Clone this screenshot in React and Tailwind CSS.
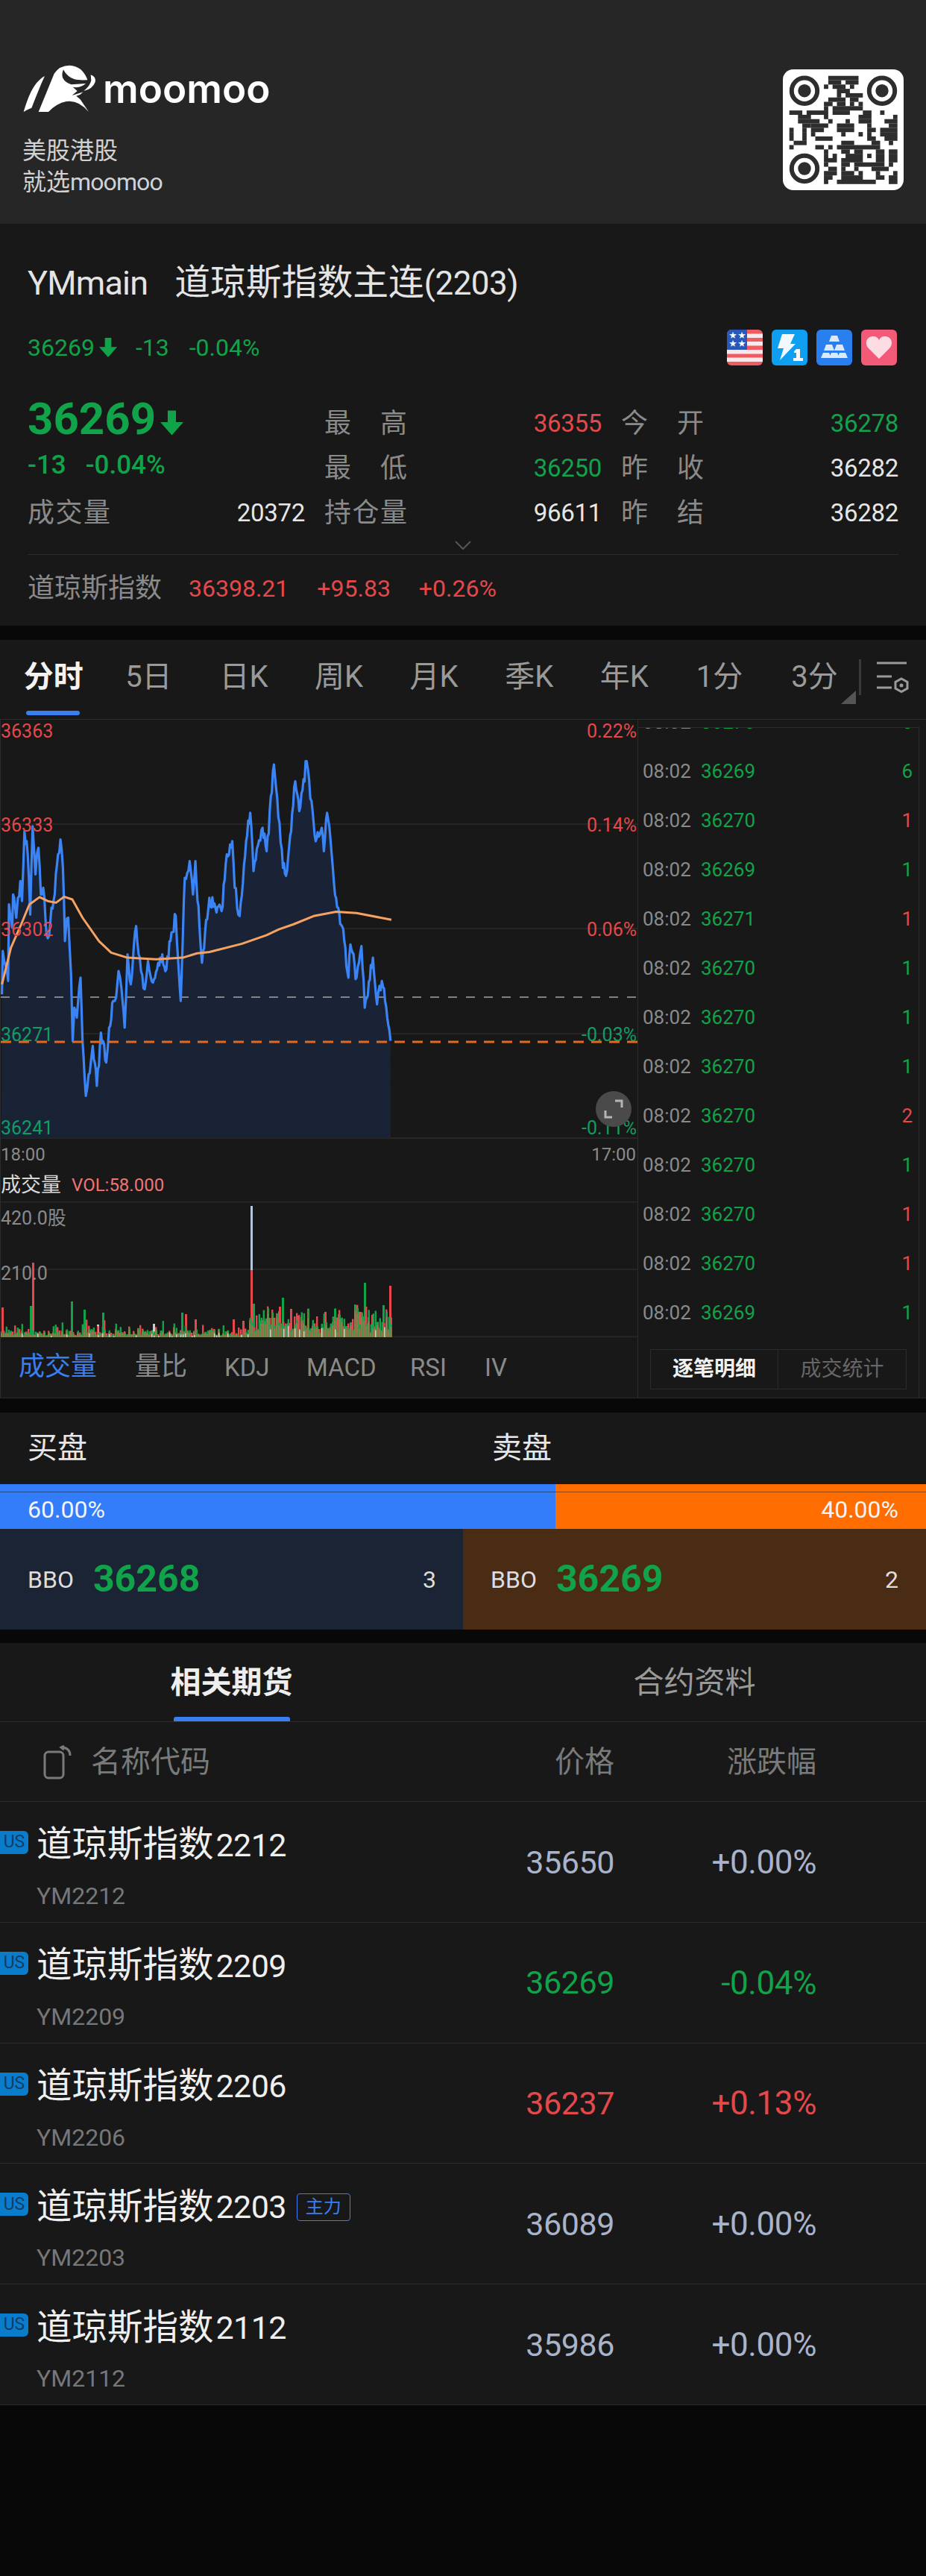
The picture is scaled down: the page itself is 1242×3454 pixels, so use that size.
import React from "react";

const GREEN = "#10a34a";
const rnd = (i) => {
  const x = Math.sin(i * 12.9898 + 4.1) * 43758.5453;
  return x - Math.floor(x);
};

const QR_ROWS = [
  [[9, 15]],
  [[9, 11], [13, 15]],
  [[8, 8], [10, 12], [14, 14]],
  [[11, 13]],
  [[11, 11], [13, 16]],
  [[9, 12], [14, 15]],
  [[8, 9], [11, 12], [14, 14], [16, 16]],
  [[8, 8], [10, 16]],
  [[0, 2], [4, 8], [10, 13], [17, 18], [21, 21]],
  [[2, 4], [8, 8], [16, 18], [24, 24]],
  [[2, 6], [9, 9], [13, 13], [16, 18], [22, 24]],
  [[3, 4], [5, 8], [11, 14], [18, 18], [23, 24]],
  [[0, 0], [3, 3], [5, 7], [11, 14], [18, 19], [21, 24]],
  [[0, 0], [3, 3], [5, 5], [12, 12], [16, 16], [18, 18], [21, 24]],
  [[0, 0], [3, 3], [6, 9], [18, 19], [22, 24]],
  [[1, 3], [12, 14], [19, 20], [23, 23]],
  [[0, 0], [6, 7], [9, 9], [11, 20]],
  [[8, 8], [12, 13], [15, 16], [20, 21], [23, 24]],
  [[8, 8], [10, 10], [13, 16], [18, 18], [20, 21], [23, 24]],
  [[8, 10], [12, 16], [20, 21], [23, 24]],
  [[8, 8], [12, 13], [15, 21], [23, 23]],
  [[9, 10], [12, 12], [15, 15], [19, 22]],
  [[8, 10], [12, 14], [16, 16], [20, 20], [24, 24]],
  [[8, 9], [12, 16], [20, 21], [23, 24]],
  [[8, 8], [11, 19], [23, 24]],
];

function QR() {
  const c = "#2e2e2e";
  const finder = (cx, cy) => (
    <g key={cx + "-" + cy}>
      <circle cx={cx} cy={cy} r="17.2" fill="none" stroke={c} strokeWidth="6" />
      <circle cx={cx} cy={cy} r="8.7" fill={c} />
    </g>
  );
  return (
    <div className="mt-[93px] mr-[30px] h-[162px] w-[162px] rounded-[14px] bg-white">
      <svg width="162" height="162" viewBox="0 0 162 162">
        {QR_ROWS.flatMap((row, r) =>
          row.map(([a, b], i) => (
            <rect key={r + "-" + i} x={8.7 + a * 5.8} y={8.7 + r * 5.8} width={(b - a + 1) * 5.8} height="5.9" fill={c} />
          ))
        )}
        {finder(29, 28.7)}
        {finder(133, 28.7)}
        {finder(29, 133)}
      </svg>
    </div>
  );
}

function Bull() {
  return (
    <svg width="100" height="66" viewBox="85 140 300 198" className="block">
      <path d="M90 332 C105 285 125 215 175 188 C155 230 135 285 122 316 Q105 322 90 332Z" fill="#fff" />
      <path d="M150 332 L213 178 Q235 145 275 145 Q325 147 346 200 L350 232 L318 262 L302 268 L318 282 L352 332 Q310 282 262 290 Q222 298 190 332Z" fill="#fff" />
      <path d="M250 162 Q232 205 282 222 L340 218 Q318 238 288 232 L306 248 L285 266 L330 252 Q362 240 370 208 L378 190 Q362 206 320 204 Q272 204 250 162Z" fill="#262626" />
      <path d="M360 183 Q382 190 378 212 Q368 240 332 248 Q358 226 362 205Z" fill="#fff" />
    </svg>
  );
}

function ArrowDown({ w = 28, h = 30, color = GREEN }) {
  return (
    <svg width={w} height={h} viewBox="0 0 28 30">
      <path d="M9 0 H19 V14 H28 L14 30 L0 14 H9Z" fill={color} />
    </svg>
  );
}

function Badges() {
  return (
    <div className="mr-[2px] flex gap-[12px]">
      <svg width="48" height="48" viewBox="0 0 48 48" className="rounded-[6px]">
        <rect width="48" height="48" fill="#ef5b62" />
        <rect y="5.5" width="48" height="5.5" fill="#f8e8ea" />
        <rect y="16" width="48" height="5.5" fill="#f8e8ea" />
        <rect y="27" width="48" height="5.5" fill="#f8e8ea" />
        <rect y="37.5" width="48" height="5.5" fill="#f8e8ea" />
        <rect width="27" height="27" fill="#2a58b8" />
        <text x="3" y="11" fontSize="10" fill="#fff">★</text>
        <text x="15" y="11" fontSize="10" fill="#fff">★</text>
        <text x="3" y="22" fontSize="10" fill="#fff">★</text>
        <text x="15" y="22" fontSize="10" fill="#fff">★</text>
      </svg>
      <svg width="48" height="48" viewBox="0 0 48 48" className="rounded-[6px]">
        <rect width="48" height="48" fill="#0f9ff0" />
        <path d="M14 6 H31 L25 19 H32 L11 41 L16 25 H8Z" fill="#f2f8fd" />
        <path d="M33 26 H38 V38 H42 V42 H29 V38 H33 V31 H30 V29Z" fill="#f2f8fd" />
      </svg>
      <svg width="48" height="48" viewBox="0 0 48 48" className="rounded-[6px]">
        <rect width="48" height="48" fill="#2a7fee" />
        <g fill="#dbe9fb">
          <path d="M20 8 H28 L31 16 H17Z" />
          <path d="M13 20 H21 L24 28 H10Z" />
          <path d="M27 20 H35 L38 28 H24Z" />
          <path d="M9 31 H17 L20 38 H6Z" />
          <path d="M20 31 H28 L31 38 H17Z" />
          <path d="M31 31 H39 L42 38 H28Z" />
        </g>
      </svg>
      <svg width="48" height="48" viewBox="0 0 48 48" className="rounded-[6px]">
        <rect width="48" height="48" fill="#f25a78" />
        <path d="M24 39 L10 25 C3 17 9 8 17 9 C20 9 23 11 24 14 C25 11 28 9 31 9 C39 8 45 17 38 25Z" fill="#fbdde3" />
      </svg>
    </div>
  );
}

function Stat({ label, value, color = "text-[#e6e6e6]" }) {
  return (
    <div className="flex h-[60px] items-center justify-between">
      <div className="flex w-[111px] justify-between text-[36px] text-[#8a8a8a]">
        {label.split("").map((c, i) => (
          <span key={i}>{c}</span>
        ))}
      </div>
      <span className={"text-[33px] tracking-[-0.3px] " + color}>{value}</span>
    </div>
  );
}

const TABS = ["分时", "5日", "日K", "周K", "月K", "季K", "年K", "1分", "3分"];

function MainTabs() {
  return (
    <div className="relative flex h-[107px] border-b border-[#2c2c2c] pl-[8px]">
      {TABS.map((t, i) => (
        <div key={t} className={"relative flex w-[127.6px] items-center justify-center pb-[6px] text-[40px] " + (i === 0 ? "font-bold text-[#f2f2f2]" : "text-[#9a9a9a]")}>
          {t}
          {i === 0 && <div className="absolute bottom-[5px] left-[27px] h-[6px] w-[72px] rounded-[3px] bg-[#3a7ff2]" />}
        </div>
      ))}
      <svg className="absolute left-[1128px] top-[66px]" width="22" height="20" viewBox="0 0 22 20">
        <path d="M0 20 L20 2 V20Z" fill="#555" />
      </svg>
      <div className="absolute left-[1152px] top-[26px] h-[48px] w-[3px] bg-[#3a3a3a]" />
      <svg className="absolute left-[1174px] top-[28px]" width="48" height="44" viewBox="0 0 48 44" fill="none" stroke="#9a9a9a" strokeWidth="3">
        <path d="M2 3 H42" />
        <path d="M2 21 H22" />
        <path d="M2 36 H22" />
        <path d="M35 24 L43 28.5 V37 L35 41.5 L27 37 V28.5Z" />
        <circle cx="35" cy="33" r="2.5" fill="#9a9a9a" stroke="none" />
      </svg>
    </div>
  );
}

const BLUE_RAW = [[3,1060],[5,930],[12,975],[18,1020],[20,790],[28,860],[30,760],[38,830],[42,770],[48,720],[52,780],[58,570],[66,640],[72,820],[78,555],[85,700],[92,620],[98,760],[104,740],[112,880],[118,885],[124,800],[132,760],[140,640],[146,595],[152,680],[157,900],[165,830],[172,1000],[176,1200],[180,1100],[186,1130],[195,1010],[200,1200],[208,1365],[215,1300],[225,1215],[235,1335],[245,1175],[258,1265],[265,1160],[275,1080],[282,1070],[288,990],[295,1040],[303,1160],[310,940],[318,1030],[331,855],[340,950],[352,1045],[360,960],[372,1025],[390,950],[405,985],[415,900],[428,825],[440,1080],[450,710],[462,660],[470,760],[476,660],[486,860],[492,965],[510,770],[525,800],[540,810],[550,670],[566,600],[572,740],[584,825],[600,600],[610,515],[618,690],[640,560],[650,630],[668,370],[676,470],[690,680],[700,690],[720,420],[730,510],[748,360],[760,480],[770,600],[785,560],[790,630],[798,515],[806,590],[815,730],[825,800],[840,900],[850,1010],[855,910],[870,1010],[882,915],[890,1100],[910,950],[920,1090],[932,1020],[945,1130],[953,1200]];
const ORANGE_RAW = [[3,1030],[25,920],[50,850],[70,790],[95,768],[115,780],[135,785],[155,767],[175,775],[200,830],[240,900],[270,935],[310,950],[380,955],[445,950],[480,937],[510,933],[590,908],[650,882],[680,865],[715,850],[765,825],[820,812],[870,816],[955,836]];

const mapPt = ([x, y]) => [x / 1.823, y / 2.24 + 860 - 965];
const fmt = (pts) => pts.map(([x, y]) => x.toFixed(1) + "," + y.toFixed(1)).join(" ");

function densify(raw) {
  const out = [];
  raw.forEach((p, i) => {
    out.push(p);
    const q = raw[i + 1];
    if (!q) return;
    const n = Math.max(1, Math.floor((q[0] - p[0]) / 2.5));
    for (let k = 1; k < n; k++) {
      const t = k / n;
      const j = (rnd(i * 7 + k) - 0.5) * 44;
      out.push([p[0] + (q[0] - p[0]) * t, p[1] + (q[1] - p[1]) * t + j]);
    }
  });
  return out;
}

function Chart() {
  const blue = densify(BLUE_RAW).map(mapPt);
  const orange = ORANGE_RAW.map(mapPt);
  const area = fmt(blue) + " 523,561 1,561";
  const labels = [
    ["36363", "0.22%", 0, "text-[#e5484a]"],
    ["36333", "0.14%", 126, "text-[#e5484a]"],
    ["36302", "0.06%", 266, "text-[#e5484a]"],
    ["36271", "-0.03%", 407, "text-[#0f9d63]"],
    ["36241", "-0.11%", 532, "text-[#0f9d63]"],
  ];
  return (
    <div className="relative h-[562px] w-[856px] border-l border-r border-[#2c2c2c] text-[25px] leading-[32px]">
      <svg className="absolute left-0 top-0" width="856" height="562" viewBox="0 0 856 562">
        <line x1="0" x2="854" y1="140" y2="140" stroke="#2a2a2a" strokeWidth="1.5" />
        <line x1="0" x2="854" y1="280" y2="280" stroke="#2a2a2a" strokeWidth="1.5" />
        <line x1="0" x2="854" y1="421" y2="421" stroke="#2a2a2a" strokeWidth="1.5" />
        <line x1="0" x2="854" y1="561" y2="561" stroke="#2c2c2c" strokeWidth="1.5" />
        <polygon points={area} fill="#1a2335" />
        <line x1="0" x2="854" y1="372" y2="372" stroke="#a5a5a5" strokeWidth="1.5" strokeDasharray="12 12" />
        <polyline points={fmt(blue)} fill="none" stroke="#3a84f5" strokeWidth="3.2" strokeLinejoin="round" />
        <polyline points={fmt(orange)} fill="none" stroke="#f5a263" strokeWidth="3" strokeLinejoin="round" />
        <line x1="0" x2="854" y1="432" y2="432" stroke="#e8681a" strokeWidth="3" strokeDasharray="14 10" />
      </svg>
      {labels.map(([l, r, top, c]) => (
        <React.Fragment key={l}>
          <span className={"absolute left-0 " + c} style={{ top }}>{l}</span>
          <span className={"absolute right-[1px] " + c} style={{ top }}>{r}</span>
        </React.Fragment>
      ))}
      <div className="absolute left-[798px] top-[498px] flex h-[48px] w-[48px] items-center justify-center rounded-full bg-[#4a4a4a]">
        <svg width="28" height="28" viewBox="0 0 28 28" fill="none" stroke="#b5b5b5" strokeWidth="3">
          <path d="M16 3 H25 V12" />
          <path d="M3 16 V25 H12" />
        </svg>
      </div>
    </div>
  );
}

const OLIVE = "#93794a";
const R = "#e5484a";
const G = "#10a34a";
const W = "#c8ced8";

function VolumeChart() {
  const bars = [];
  for (let i = 0; i < 175; i++) {
    const x = i * 3;
    const tall = x >= 332;
    const base = tall ? 8 + rnd(i) * 14 : 2 + rnd(i) * 5;
    const r = base * (0.7 + rnd(i + 40) * 1.7) + (rnd(i + 300) > 0.9 ? 10 : 0);
    const g = base * (0.7 + rnd(i + 80) * 1.7) + (rnd(i + 500) > 0.9 ? 10 : 0);
    bars.push([x, r, R]);
    bars.push([x + 0.6, g, G]);
    bars.push([x, Math.min(r, g) * 0.8, OLIVE]);
    if (rnd(i + 700) > 0.75) bars.push([x + 1, base * (0.5 + rnd(i + 20) * 0.6), W]);
  }
  const spikes = [
    [1, 40, R], [39, 42, G], [42, 100, R], [94, 48, G], [111, 37, G], [136, 33, G], [129, 17, W], [204, 18, W],
    [242, 33, G], [247, 31, R], [260, 24, R], [311, 24, R], [324, 22, R],
    [335, 176, "#b8c6dc"], [335, 90, R], [338, 45, G], [373, 41, R], [377, 53, G], [388, 38, R], [398, 29, R],
    [411, 38, R], [434, 34, R], [447, 38, G], [452, 31, G], [480, 34, R], [487, 73, G], [497, 30, R], [512, 43, G],
    [521, 69, R], [522, 26, G],
  ];
  return (
    <div className="relative h-[182px] w-[856px] border-l border-r border-[#2c2c2c] text-[25px] text-[#8a8a8a]">
      <svg className="absolute left-0 top-0" width="854" height="182" viewBox="0 0 854 182">
        <line x1="0" x2="854" y1="0.5" y2="0.5" stroke="#2a2a2a" strokeWidth="1.5" />
        <line x1="0" x2="854" y1="91" y2="91" stroke="#2a2a2a" strokeWidth="1.5" />
        <line x1="0" x2="854" y1="181.5" y2="181.5" stroke="#2a2a2a" strokeWidth="1.5" />
        {spikes.map(([x, h, c], i) => (
          <rect key={"s" + i} x={x} y={182 - h} width="3" height={h} fill={c} />
        ))}
        {bars.map(([x, h, c], i) => (
          <rect key={i} x={x} y={182 - h} width={c === W ? 1.5 : 2.4} height={h} fill={c} />
        ))}
      </svg>
      <span className="absolute left-0 top-[4px]">420.0股</span>
      <span className="absolute left-0 top-[78px]">210.0</span>
    </div>
  );
}

const TRADES = [
  ["36270", "5", "g"], ["36269", "6", "g"], ["36270", "1", "r"], ["36269", "1", "g"], ["36271", "1", "r"], ["36270", "1", "g"],
  ["36270", "1", "g"], ["36270", "1", "g"], ["36270", "2", "r"], ["36270", "1", "g"], ["36270", "1", "r"], ["36270", "1", "r"], ["36269", "1", "g"],
];

function Trades() {
  return (
    <div className="mr-[9px] mt-[10px] flex h-[900px] flex-1 flex-col border-r border-t border-[#2c2c2c]">
      <div className="h-[824px] overflow-hidden">
        <div className="-mt-[41px]">
          {TRADES.map(([p, q, c], i) => (
            <div key={i} className="flex h-[66px] items-center pl-[6px] pr-[8px] text-[26px]">
              <span className="w-[78px] text-[#8a8a8a]">08:02</span>
              <span className="text-[#10a34a]">{p}</span>
              <span className={"ml-auto " + (c === "g" ? "text-[#10a34a]" : "text-[#e5484a]")}>{q}</span>
            </div>
          ))}
        </div>
      </div>
      <div className="mx-[16px] mt-[9px] flex h-[54px] border border-[#2c2c2c] text-[28px]">
        <div className="flex w-[171px] items-center justify-center border-r border-[#2c2c2c] font-bold text-[#f0f0f0]">逐笔明细</div>
        <div className="flex flex-1 items-center justify-center text-[#666]">成交统计</div>
      </div>
    </div>
  );
}

const PRODUCTS = [
  ["2212", "35650", "+0.00%", "text-[#a9b3c9]"],
  ["2209", "36269", "-0.04%", "text-[#10a34a]"],
  ["2206", "36237", "+0.13%", "text-[#e5484a]"],
  ["2203", "36089", "+0.00%", "text-[#a9b3c9]", true],
  ["2112", "35986", "+0.00%", "text-[#a9b3c9]"],
];

function ProductRow({ code, price, change, color, main }) {
  return (
    <div className="flex h-[161.8px] items-center border-b border-[#2a2a2a] pr-[147px]">
      <div className="flex h-full flex-1">
        <div className="mt-[39px] flex h-[31px] w-[38px] items-center justify-center rounded-r-[6px] bg-[#0a7ccc] text-[23px] text-[#0f3d66]">US</div>
        <div className="ml-[11px]">
          <div className="mt-[28px] flex h-[60px] items-center text-[#efefef]">
            <span className="text-[47.5px]">道琼斯指数</span>
            <span className="ml-[3px] text-[43px] tracking-[-0.6px]">{code}</span>
            {main && (
              <span className="ml-[14px] flex h-[37px] w-[72px] items-center justify-center rounded-[4px] border border-[#3a7ff2] text-[24px] text-[#3a7ff2]">主力</span>
            )}
          </div>
          <div className="mt-[18px] text-[32px] leading-[40px] text-[#777]">YM{code}</div>
        </div>
      </div>
      <span className={"w-[200px] pt-[1px] text-right text-[43px] tracking-[-0.4px] " + color}>{price}</span>
      <span className={"w-[271px] pt-[1px] text-right text-[44px] tracking-[-0.4px] " + color}>{change}</span>
    </div>
  );
}

export default function App() {
  return (
    <div lang="zh-CN" className="h-[3454px] w-[1242px] overflow-hidden bg-[#080808] [font-family:Roboto,'Noto_Sans_CJK_SC',sans-serif]">
      <header className="flex h-[300px] justify-between bg-[#262626]">
        <div className="pl-[30px] pt-[86px]">
          <div className="flex items-center">
            <Bull />
            <span className="ml-[8px] text-[53px] font-semibold leading-[60px] text-white [font-family:Inter,sans-serif]">moomoo</span>
          </div>
          <div className="mt-[29px] text-[32px] leading-[42px] text-[#d2d2d2]">
            <div>美股港股</div>
            <div>
              就选<span className="tracking-[-0.9px]">moomoo</span>
            </div>
          </div>
        </div>
        <QR />
      </header>

      <section className="h-[539px] bg-[#181818] px-[37px] pt-[50px]">
        <div className="flex h-[60px] items-center text-[#e4e4e4]">
          <span className="text-[45px] tracking-[-0.8px]">YMmain</span>
          <span className="ml-[36px] text-[47.8px]">道琼斯指数主连</span>
          <span className="text-[44px] tracking-[-0.5px]">(2203)</span>
        </div>
        <div className="flex items-center justify-between pt-[32px]">
          <div className="flex items-center text-[32px] text-[#10a34a]">
            <span>36269</span>
            <span className="ml-[4px]"><ArrowDown w={28} h={26} /></span>
            <span className="ml-[23px]">-13</span>
            <span className="ml-[27px]">-0.04%</span>
          </div>
          <Badges />
        </div>
        <div className="mt-[48px] grid grid-cols-[372px_372px_372px] gap-x-[26px]">
          <div className="row-span-2 text-[#10a34a]">
            <div className="flex h-[48px] items-center">
              <span className="text-[60px] font-bold leading-[48px]">36269</span>
              <span className="ml-[6px] mt-[10px]"><ArrowDown w={31} h={36} /></span>
            </div>
            <div className="mt-[16px] flex text-[35px] font-medium leading-[44px]">
              <span>-13</span>
              <span className="ml-[26px]">-0.04%</span>
            </div>
          </div>
          <Stat label="最高" value="36355" color="text-[#e5484a]" />
          <Stat label="今开" value="36278" color="text-[#10a34a]" />
          <Stat label="最低" value="36250" color="text-[#10a34a]" />
          <Stat label="昨收" value="36282" />
          <Stat label="成交量" value="20372" />
          <Stat label="持仓量" value="96611" />
          <Stat label="昨结" value="36282" />
        </div>
        <div className="flex h-[26px] items-center justify-center border-b border-[#2c2c2c]">
          <svg width="24" height="14" viewBox="0 0 24 14" fill="none" stroke="#555" strokeWidth="2">
            <path d="M2 2 L12 12 L22 2" />
          </svg>
        </div>
        <div className="flex h-[90px] items-center text-[32px] text-[#e5484a]">
          <span className="w-[216px] text-[36px] text-[#8a8a8a]">道琼斯指数</span>
          <span>36398.21</span>
          <span className="ml-[38px]">+95.83</span>
          <span className="ml-[38px]">+0.26%</span>
        </div>
      </section>

      <div className="h-[19px]" />

      <section className="h-[1017px] border-b border-[#2c2c2c] bg-[#181818]">
        <MainTabs />
        <div className="flex">
          <div className="w-[856px]">
            <Chart />
            <div className="flex h-[40px] w-[856px] items-center justify-between border-l border-r border-[#2c2c2c] pr-[2px] pt-[2px] text-[24px] text-[#8a8a8a]">
              <span>18:00</span>
              <span>17:00</span>
            </div>
            <div className="flex h-[44px] w-[856px] items-center border-l border-r border-[#2c2c2c]">
              <span className="text-[27px] text-[#d8d8d8]">成交量</span>
              <span className="ml-[14px] text-[24px] text-[#ef7474]">VOL:58.000</span>
            </div>
            <VolumeChart />
            <div className="flex h-[81px] w-[856px] items-center border-l border-r border-[#2c2c2c] pl-[24px] text-[33px] text-[#8a8a8a]">
              <span className="w-[156px] text-[35px] text-[#3a7ff2]">成交量</span>
              <span className="w-[120px] text-[35px]">量比</span>
              <span className="w-[110px]">KDJ</span>
              <span className="w-[139px]">MACD</span>
              <span className="w-[100px]">RSI</span>
              <span>IV</span>
            </div>
          </div>
          <Trades />
        </div>
      </section>

      <div className="h-[19px]" />

      <section className="bg-[#181818]">
        <div className="grid h-[96px] grid-cols-2 items-center text-[40px] text-[#e6e6e6]">
          <span className="pl-[37px]">买盘</span>
          <span className="pl-[39px]">卖盘</span>
        </div>
        <div className="relative flex h-[60px] items-center text-[32px] text-[#f5f5f5]">
          <div className="flex h-full w-[60%] items-center bg-[#337cfa] pl-[37px] pt-[8px]">60.00%</div>
          <div className="flex h-full w-[40%] items-center justify-end bg-[#ff6d00] pr-[37px] pt-[8px]">40.00%</div>
          <div className="absolute left-0 top-[10px] h-[1px] w-full bg-black/40" />
        </div>
        <div className="grid h-[135px] grid-cols-2 text-[32px] text-[#dedede]">
          <div className="flex items-center bg-[#1b2434] pl-[37px] pr-[36px]">
            <span>BBO</span>
            <span className="ml-[26px] text-[50px] font-bold text-[#10a34a]">36268</span>
            <span className="ml-auto">3</span>
          </div>
          <div className="flex items-center bg-[#4a2c15] pl-[37px] pr-[37px]">
            <span>BBO</span>
            <span className="ml-[26px] text-[50px] font-bold text-[#10a34a]">36269</span>
            <span className="ml-auto">2</span>
          </div>
        </div>
      </section>

      <div className="h-[18px]" />

      <section className="bg-[#181818]">
        <div className="grid h-[106px] grid-cols-2 border-b border-[#2c2c2c] text-[41px]">
          <div className="relative flex items-center justify-center pt-[2px] font-bold text-[#eeeeee]">
            相关期货
            <div className="absolute bottom-[0px] left-[233px] h-[6px] w-[156px] rounded-t-[3px] bg-[#3a7ff2]" />
          </div>
          <div className="flex items-center justify-center pt-[2px] text-[#9a9a9a]">合约资料</div>
        </div>
        <div className="flex h-[107px] items-center border-b border-[#2a2a2a] pl-[58px] pr-[147px] pt-[2px] text-[40px] text-[#7a7a7a]">
          <svg width="40" height="46" viewBox="0 0 40 46" fill="none" stroke="#7a7a7a" strokeWidth="3">
            <rect x="2" y="9" width="25" height="35" rx="5" />
            <path d="M24 3 Q36 3 36 14" />
            <path d="M28 1 L24 3 L28 6" />
          </svg>
          <span className="ml-[24px] flex-1">名称代码</span>
          <span>价格</span>
          <span className="w-[271px] text-right">涨跌幅</span>
        </div>
        {PRODUCTS.map(([code, price, change, color, main]) => (
          <ProductRow key={code} code={code} price={price} change={change} color={color} main={main} />
        ))}
      </section>
    </div>
  );
}
